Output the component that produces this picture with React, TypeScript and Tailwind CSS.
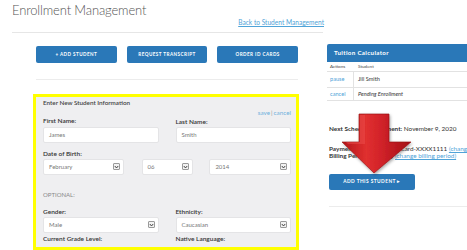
import React from 'react';

const font = { fontFamily: 'Lato, "Open Sans", sans-serif' };

const Select = ({ value, className = '' }: { value: string; className?: string }) => (
  <div className={`h-[16px] bg-white rounded-[2px] border border-[#e4e4e6] flex items-center justify-between pl-[5px] pr-[3px] ${className}`}>
    <span className="text-[6px] text-[#777]">{value}</span>
    <span className="w-[7px] h-[7px] border border-[#9a9a9a] bg-[#f2f2f2] rounded-[1px] flex items-center justify-center">
      <svg width="5" height="4" viewBox="0 0 5 4">
        <path d="M0.8 1 L2.5 3 L4.2 1" fill="none" stroke="#333" strokeWidth="0.9" />
      </svg>
    </span>
  </div>
);

const Input = ({ value }: { value: string }) => (
  <div className="h-[16px] bg-white rounded-[2px] border border-[#e4e4e6] flex items-center pl-[5px]">
    <span className="text-[6px] text-[#777]">{value}</span>
  </div>
);

const Label = ({ children }: { children: React.ReactNode }) => (
  <div className="text-[6.5px] font-semibold text-[#333] leading-[8px]">{children}</div>
);

const ActionButton = ({ children, className = '' }: { children: React.ReactNode; className?: string }) => (
  <div className={`h-[17px] bg-[#2a78b8] rounded-[2px] flex items-center justify-center text-white text-[4.6px] font-bold tracking-[0.45px] ${className}`}>
    {children}
  </div>
);

export default function App() {
  return (
    <div className="w-[467px] h-[250px] overflow-hidden bg-white flex relative" style={font}>
      {/* Left side */}
      <div className="w-[325px] shrink-0 pl-[12px] flex flex-col">
        <h1 className="text-[13px] text-[#555] font-light leading-none mt-[4px] tracking-[-0.15px]">Enrollment Management</h1>
        <div className="flex justify-end pr-[1px] mt-[1px]">
          <a className="text-[6.6px] text-[#4fa3d8] underline leading-[8px]">Back to Student Management</a>
        </div>
        <div className="h-px bg-[#e6e6e6] mt-[6px] mr-[2px]" />

        <div className="pl-[24px] pr-[27px] mt-[13px] flex gap-[10px]">
          <ActionButton className="flex-1">+ ADD STUDENT</ActionButton>
          <ActionButton className="flex-1">REQUEST TRANSCRIPT</ActionButton>
          <ActionButton className="flex-1">ORDER ID CARDS</ActionButton>
        </div>
        <div className="h-px bg-[#ececec] ml-[24px] mr-[27px] mt-[16px]" />

        {/* Form panel */}
        <div className="ml-[21px] mr-[26px] mt-[14px] border-[3px] border-[#ffff00] bg-[#efeff1] pl-[7px] pr-[5px] pt-[2px] h-[158px] overflow-hidden">
          <div className="text-[6.3px] font-semibold text-[#444] leading-[8px]">Enter New Student Information</div>
          <div className="flex justify-end text-[6.3px] text-[#6fb1dd] leading-[8px] mt-[2px]">
            save<span className="mx-[1px] text-[#999]">|</span> cancel
          </div>
          <div className="grid grid-cols-2 gap-x-[17px]">
            <div>
              <Label>First Name:</Label>
            </div>
            <div className="mt-[1px]">
              <Label>Last Name:</Label>
            </div>
          </div>
          <div className="grid grid-cols-2 gap-x-[17px] mt-[1px]">
            <Input value="James" />
            <Input value="Smith" />
          </div>
          <div className="mt-[7px]">
            <Label>Date of Birth:</Label>
          </div>
          <div className="flex mt-[1px]">
            <Select value="February" className="w-[81px]" />
            <Select value="06" className="w-[52px] ml-[18px]" />
            <Select value="2014" className="w-[82px] ml-[16px]" />
          </div>
          <div className="text-[6px] text-[#888] leading-[8px] mt-[16px]">OPTIONAL:</div>
          <div className="grid grid-cols-2 gap-x-[17px] mt-[9px]">
            <Label>Gender:</Label>
            <Label>Ethnicity:</Label>
          </div>
          <div className="grid grid-cols-2 gap-x-[17px] mt-[1px]">
            <Select value="Male" />
            <Select value="Caucasian" />
          </div>
          <div className="grid grid-cols-2 gap-x-[17px] mt-[2px]">
            <Label>Current Grade Level:</Label>
            <Label>Native Language:</Label>
          </div>
        </div>
      </div>

      {/* Right side */}
      <div className="ml-[2px] w-[170px] shrink-0 flex flex-col">
        <div className="mt-[44px] h-[18px] bg-[#2a78b8] rounded-tl-[2px] flex items-center pl-[7px] text-white text-[6.2px] font-bold tracking-[0.35px]">
          Tuition Calculator
        </div>
        <div className="flex text-[4.6px] text-[#444] h-[10px] items-center border-b border-[#e2e2e2]">
          <div className="w-[27px] pl-[3px]">Actions</div>
          <div className="pl-[4px]">Student</div>
        </div>
        <div className="flex h-[16px] items-stretch border-b border-[#e2e2e2] text-[5.6px]">
          <div className="w-[27px] pl-[3px] border-r border-[#e2e2e2] flex items-center text-[#4fa3d8]">pause</div>
          <div className="pl-[4px] flex items-center text-[#333]">Jill Smith</div>
        </div>
        <div className="flex h-[13px] items-stretch border-b border-[#e2e2e2] text-[5.6px]">
          <div className="w-[27px] pl-[3px] border-r border-[#e2e2e2] flex items-center text-[#4fa3d8]">cancel</div>
          <div className="pl-[4px] flex items-center italic text-[#333]">Pending Enrollment</div>
        </div>

        <div className="mt-[24px] pl-[2px] text-[6.4px] text-[#333] whitespace-nowrap leading-[8px]">
          <span className="font-bold">Next Scheduled Payment:</span> November 9, 2020
        </div>
        <div className="mt-[12px] pl-[2px] text-[6.4px] text-[#333] whitespace-nowrap leading-[7px]">
          <span className="font-bold">Payment Method:</span> Credit Card-XXXX1111{' '}
          <span className="text-[#4fa3d8] underline">(change payment method)</span>
        </div>
        <div className="pl-[2px] text-[6.4px] text-[#333] whitespace-nowrap leading-[7px]">
          <span className="font-bold">Billing Period:</span> Monthly{' '}
          <span className="text-[#4fa3d8] underline">(change billing period)</span>
        </div>
        <div className="mt-[15px] ml-[2px] w-[86px] h-[16px] bg-[#2a78b8] rounded-[2px] flex items-center justify-center text-white text-[4.8px] font-bold tracking-[0.45px]">
          ADD THIS STUDENT ▸
        </div>
        <div className="h-px bg-[#ececec] mt-[16px] ml-[2px]" />
      </div>

      {/* Red arrow overlay */}
      <svg className="absolute left-[338px] top-[111px]" width="78" height="66" viewBox="0 0 78 66">
        <defs>
          <linearGradient id="ar" x1="0" y1="0" x2="1" y2="0">
            <stop offset="0" stopColor="#b3151b" />
            <stop offset="0.35" stopColor="#e0302f" />
            <stop offset="0.55" stopColor="#d3232a" />
            <stop offset="1" stopColor="#a30f16" />
          </linearGradient>
          <filter id="sh" x="-20%" y="-20%" width="140%" height="140%">
            <feDropShadow dx="1" dy="1.5" stdDeviation="1.5" floodColor="#000" floodOpacity="0.35" />
          </filter>
        </defs>
        <path d="M21 3 H51 V31 H73 L36 62 L4 31 H21 Z" fill="url(#ar)" filter="url(#sh)" stroke="#8e0d12" strokeWidth="0.6" />
        <path d="M22 4 H27 V33 H10 L8 31 H22 Z" fill="#ef5350" opacity="0.45" />
      </svg>
    </div>
  );
}
